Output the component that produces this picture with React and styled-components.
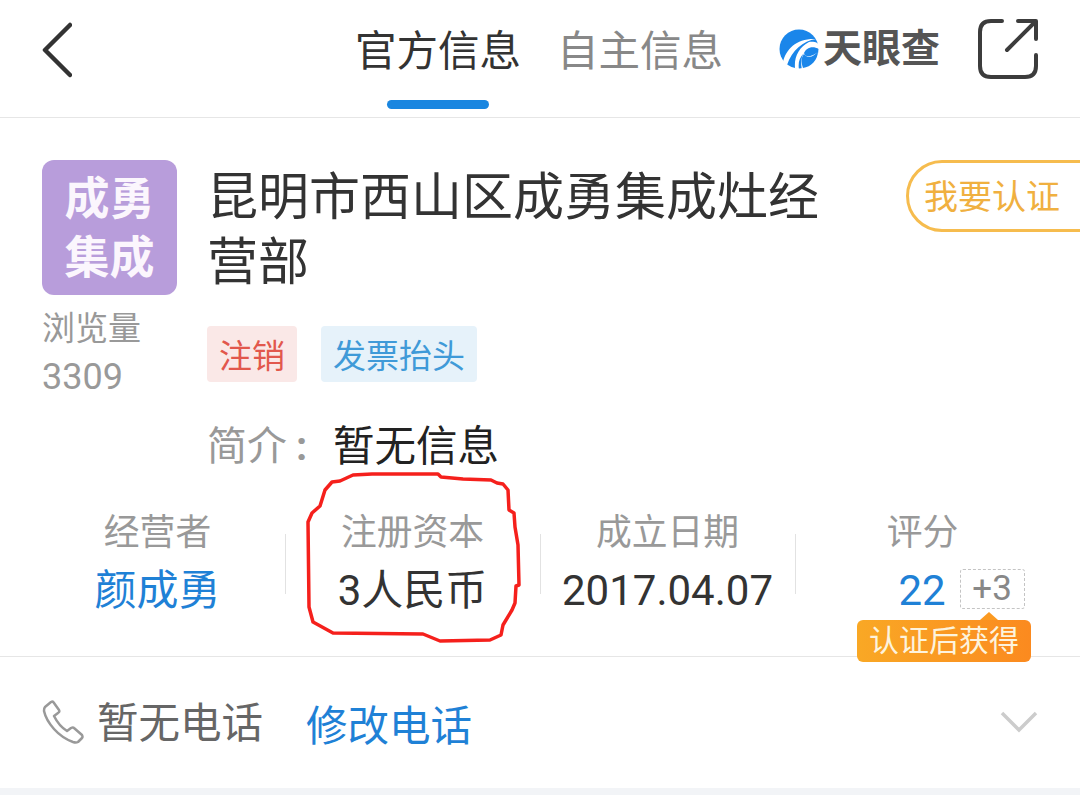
import React from 'react'
import styled, { createGlobalStyle } from 'styled-components'

const GlobalStyle = createGlobalStyle`
  html, body {
    margin: 0;
    padding: 0;
    background: #fff;
    overflow: hidden;
  }
  body {
    font-family: Roboto, "Noto Sans CJK SC", sans-serif;
  }
`

const RING =
  'M353 475 L372 474 L438 474 L441 477 L463 479 L491 480 L497 483 L503 484 L508 490 L509 510 L514 513 L515 527 L518 545 L519 585 L516 586 L515 603 L512 610 L503 625 L501 635 L490 640 L440 641 L423 634 L333 633 L313 622 L309 607 L308 522 L312 513 L320 506 L325 490 L332 482 L340 481 Z'

const App = () => (
  <Page>
    <GlobalStyle />
    <Header>
      <BackIcon viewBox="0 0 30 56">
        <path d="M28 3 L3 28 L28 53" />
      </BackIcon>
      <Tabs>
        <Tab $active>
          官方信息
          <TabBar />
        </Tab>
        <Tab>自主信息</Tab>
      </Tabs>
      <Logo>
        <svg width="40" height="40" viewBox="0 0 40 40">
          <circle cx="20" cy="20" r="19.5" fill="#1a86ea" />
          <path d="M4 33 C7 20 18 9 37 10 C24 12 13 21 8 36 Z" fill="#fff" />
          <path d="M16 39 C15 28 20 18 30 13 C40 12 41 17 40 20 C33 16 27 19 25 24 C26 28 31 29 39 23 L41 41 L23 41 C21 32 23 27 25 24 C20 29 19 34 20 41 Z" fill="#fff" />
          <path d="M25 25 C29 30 35 28 39 22 C39 31 32 38 24 39 C22 33 22 29 25 25 Z" fill="#1a86ea" />
        </svg>
        <LogoText>天眼查</LogoText>
      </Logo>
      <ShareIcon viewBox="0 0 60 60">
        <path d="M24 2 H13 Q2 2 2 13 V47 Q2 58 13 58 H47 Q58 58 58 47 V36" />
        <path d="M40 2 H58 V20" />
        <path d="M57 3 L29 31" />
      </ShareIcon>
    </Header>

    <Company>
      <LeftCol>
        <Avatar>
          成勇
          <br />
          集成
        </Avatar>
        <Views>
          浏览量
          <br />
          <ViewCount>3309</ViewCount>
        </Views>
      </LeftCol>
      <MainCol>
        <TitleRow>
          <Title>昆明市西山区成勇集成灶经营部</Title>
          <ClaimButton>我要认证</ClaimButton>
        </TitleRow>
        <Tags>
          <Tag $bg="#fae8e7" $color="#e2574c">注销</Tag>
          <Tag $bg="#e6f2fa" $color="#3f9ad8">发票抬头</Tag>
        </Tags>
        <Intro>
          <IntroLabel>简介<IntroColon>:</IntroColon></IntroLabel>
          <span>暂无信息</span>
        </Intro>
      </MainCol>
    </Company>

    <Stats>
      <Stat>
        <StatLabel>经营者</StatLabel>
        <StatValue $blue>颜成勇</StatValue>
      </Stat>
      <Stat $divider>
        <StatLabel>注册资本</StatLabel>
        <StatValue>3人民币</StatValue>
      </Stat>
      <Stat $divider>
        <StatLabel>成立日期</StatLabel>
        <StatValue>2017.04.07</StatValue>
      </Stat>
      <Stat $divider>
        <StatLabel>评分</StatLabel>
        <ScoreRow>
          <StatValue $blue>22</StatValue>
          <Bonus>+3</Bonus>
        </ScoreRow>
        <BonusTip>认证后获得</BonusTip>
      </Stat>
    </Stats>

    <PhoneRow>
      <PhoneIcon viewBox="0 0 42 44">
        <path d="M3 7 L9 2 Q11 1 12 3 L17 10 Q18 12 16 13 L12 16 Q17 26 25 31 L29 28 Q31 27 32 28 L40 35 Q41 37 40 38 L36 42 Q34 43 31 42 Q20 38 12 29 Q4 20 2 11 Q2 8 3 7 Z" />
      </PhoneIcon>
      <PhoneText>暂无电话</PhoneText>
      <PhoneEdit>修改电话</PhoneEdit>
      <Chevron viewBox="0 0 38 22">
        <path d="M2 2 L19 19 L36 2" />
      </Chevron>
    </PhoneRow>
    <Footer />

    <Ring viewBox="0 0 1080 795">
      <path d={RING} />
    </Ring>
  </Page>
)

export default App

const Page = styled.div`
  position: relative;
  width: 1080px;
  height: 795px;
  overflow: hidden;
  background: #fff;
  color: #333;
`

const Header = styled.div`
  display: flex;
  align-items: center;
  height: 118px;
  padding: 0 42px;
  box-sizing: border-box;
  border-bottom: 1px solid #e6e6e6;
`

const BackIcon = styled.svg`
  width: 30px;
  height: 56px;
  margin-top: -18px;
  flex-shrink: 0;
  fill: none;
  stroke: #333;
  stroke-width: 4.5;
  stroke-linecap: round;
  stroke-linejoin: round;
`

const Tabs = styled.div`
  display: flex;
  gap: 36px;
  margin-left: 283px;
  margin-top: -14px;
`

const Tab = styled.div`
  position: relative;
  font-size: 41.500px;
  line-height: 50px;
  color: ${(props) => (props.$active ? '#333' : '#888')};
`

const TabBar = styled.div`
  position: absolute;
  left: 32px;
  top: 73px;
  width: 102px;
  height: 9px;
  border-radius: 5px;
  background: #1a86e0;
`

const Logo = styled.div`
  display: flex;
  align-items: center;
  gap: 4px;
  margin-left: 56px;
  margin-top: -19px;
`

const LogoText = styled.div`
  font-size: 39px;
  line-height: 44px;
  font-weight: 700;
  color: #555;
`

const ShareIcon = styled.svg`
  width: 60px;
  height: 60px;
  margin-left: auto;
  margin-top: -20px;
  flex-shrink: 0;
  fill: none;
  stroke: #3c3c3c;
  stroke-width: 4;
  stroke-linecap: round;
  stroke-linejoin: round;
`

const Company = styled.div`
  display: flex;
  padding: 42px 0 0 42px;
  height: 343px;
  box-sizing: border-box;
`

const LeftCol = styled.div`
  width: 135px;
  flex-shrink: 0;
`

const Avatar = styled.div`
  width: 135px;
  height: 135px;
  border-radius: 12px;
  background: #b89ddb;
  color: #fbf6fd;
  font-size: 45px;
  font-weight: 700;
  line-height: 59px;
  text-align: center;
  padding-top: 10px;
  box-sizing: border-box;
`

const Views = styled.div`
  margin-top: 9px;
  font-size: 33px;
  line-height: 49px;
  color: #999;
`

const ViewCount = styled.span`
  font-size: 36px;
`

const MainCol = styled.div`
  flex: 1;
  min-width: 0;
  padding-left: 30px;
`

const TitleRow = styled.div`
  display: flex;
  justify-content: space-between;
  align-items: flex-start;
`

const Title = styled.div`
  width: 625px;
  margin-top: 5px;
  font-size: 51px;
  line-height: 65px;
  color: #333;
`

const ClaimButton = styled.div`
  flex-shrink: 0;
  width: 210px;
  height: 72px;
  margin-right: -36px;
  padding-left: 15px;
  box-sizing: border-box;
  border: 3px solid #f6bc4e;
  border-radius: 36px;
  font-size: 34px;
  line-height: 68px;
  color: #f0b040;
`

const Tags = styled.div`
  display: flex;
  gap: 24px;
  margin-top: 31px;
`

const Tag = styled.div`
  height: 56px;
  padding: 0 12px;
  border-radius: 4px;
  font-size: 33px;
  line-height: 62px;
  background: ${(props) => props.$bg};
  color: ${(props) => props.$color};
`

const Intro = styled.div`
  display: flex;
  margin-top: 37px;
  font-size: 41.500px;
  line-height: 56px;
  color: #222;
`

const IntroLabel = styled.span`
  width: 126px;
  color: #999;
  font-size: 40px;
`

const IntroColon = styled.span`
  margin-left: 9px;
  font-weight: 700;
`

const Stats = styled.div`
  display: grid;
  grid-template-columns: repeat(4, 255px);
  height: 196px;
  box-sizing: border-box;
  padding: 48px 0 0 30px;
  border-bottom: 1px solid #e6e6e6;
`

const Stat = styled.div`
  position: relative;
  display: flex;
  flex-direction: column;
  align-items: center;
  &::before {
    content: '';
    display: ${(props) => (props.$divider ? 'block' : 'none')};
    position: absolute;
    left: 0;
    top: 25px;
    width: 1px;
    height: 60px;
    background: #e2e2e2;
  }
`

const StatLabel = styled.div`
  font-size: 35.800px;
  line-height: 48px;
  color: #999;
`

const StatValue = styled.div`
  margin-top: 8px;
  font-size: 42px;
  line-height: 52px;
  color: ${(props) => (props.$blue ? '#1f81d6' : '#333')};
`

const ScoreRow = styled.div`
  display: flex;
  align-items: flex-start;
  margin-left: 78px;
  white-space: nowrap;
  gap: 14px;
`

const Bonus = styled.div`
  margin-top: 12px;
  width: 65px;
  height: 40px;
  box-sizing: border-box;
  border: 1px dashed #c4c4c4;
  border-radius: 3px;
  font-size: 35px;
  line-height: 38px;
  text-align: center;
  color: #888;
`

const BonusTip = styled.div`
  position: absolute;
  left: 62px;
  top: 111px;
  width: 174px;
  height: 42px;
  border-radius: 6px;
  background: linear-gradient(90deg, #f9a825, #fb8a1f);
  color: #fdf3dd;
  font-size: 30px;
  line-height: 42px;
  text-align: center;
  white-space: nowrap;
  &::before {
    content: '';
    position: absolute;
    left: 123px;
    top: -8px;
    border-left: 9px solid transparent;
    border-right: 9px solid transparent;
    border-bottom: 8px solid #fb9a22;
  }
`

const PhoneRow = styled.div`
  display: flex;
  align-items: center;
  height: 131px;
  padding: 0 42px;
  box-sizing: border-box;
`

const PhoneIcon = styled.svg`
  width: 42px;
  height: 44px;
  flex-shrink: 0;
  margin-top: -2px;
  fill: none;
  stroke: #999;
  stroke-width: 2.500;
  stroke-linejoin: round;
`

const PhoneText = styled.div`
  margin-left: 13px;
  margin-top: -6px;
  font-size: 41.500px;
  color: #666;
`

const PhoneEdit = styled.div`
  margin-left: 43px;
  margin-top: 0;
  font-size: 41.500px;
  color: #1f81d6;
`

const Chevron = styled.svg`
  width: 38px;
  height: 22px;
  margin-left: auto;
  margin-top: -1px;
  flex-shrink: 0;
  fill: none;
  stroke: #ccc;
  stroke-width: 3.500;
`

const Footer = styled.div`
  height: 8px;
  background: #f2f4f7;
`

const Ring = styled.svg`
  position: absolute;
  left: 0;
  top: 0;
  width: 1080px;
  height: 795px;
  fill: none;
  stroke: #f5201c;
  stroke-width: 3.500;
  stroke-linejoin: round;
  pointer-events: none;
`
